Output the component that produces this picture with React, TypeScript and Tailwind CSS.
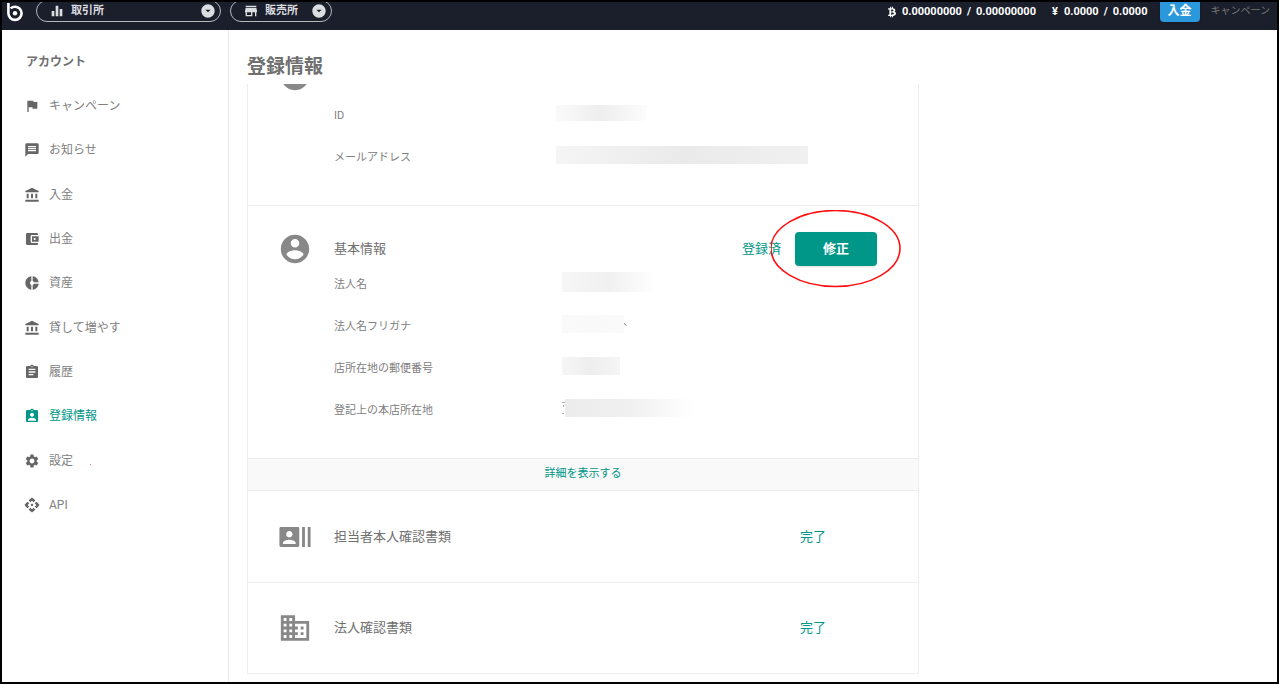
import type { ReactNode } from 'react'
import clsx from 'clsx'
import { FaBtc } from 'react-icons/fa'
import {
  MdAccountBalance,
  MdAccountBalanceWallet,
  MdArrowDropDownCircle,
  MdAssignment,
  MdAssignmentInd,
  MdCheckCircle,
  MdDomain,
  MdDonutSmall,
  MdEqualizer,
  MdFlag,
  MdMessage,
  MdRecentActors,
  MdSettings,
  MdStore
} from 'react-icons/md'

type Icon = (props: { className?: string }) => ReactNode

interface NavItem {
  label: string
  icon: Icon
  active?: boolean
  dot?: boolean
}

interface Field {
  label: string
  // size and shading of the masked value
  mask: string
  mark?: 'before' | 'after'
}

const PersonIcon: Icon = ({ className }) => (
  <svg viewBox="0 0 24 24" className={className} fill="currentColor">
    <path d="M12 2C6.48 2 2 6.48 2 12s4.48 10 10 10 10-4.48 10-10S17.52 2 12 2zm0 3c1.66 0 3 1.34 3 3s-1.34 3-3 3-3-1.34-3-3 1.34-3 3-3zm0 14.2c-2.5 0-4.71-1.28-6-3.22.03-1.99 4-3.08 6-3.08 1.99 0 5.97 1.09 6 3.08-1.29 1.94-3.5 3.22-6 3.22z" />
  </svg>
)

const ApiIcon: Icon = ({ className }) => (
  <svg viewBox="0 0 24 24" className={className} fill="none">
    <path
      d="M8.2 6.4L12 3.2l3.8 3.2M17.6 8.2l3.2 3.8-3.2 3.8M15.8 17.6L12 20.8l-3.8-3.2M6.4 15.8L3.2 12l3.2-3.8"
      stroke="currentColor"
      strokeWidth="3.8"
    />
    <circle cx="12" cy="12" r="1.7" fill="currentColor" />
  </svg>
)

const navItems: NavItem[] = [
  { label: 'キャンペーン', icon: MdFlag },
  { label: 'お知らせ', icon: MdMessage },
  { label: '入金', icon: MdAccountBalance },
  { label: '出金', icon: MdAccountBalanceWallet },
  { label: '資産', icon: MdDonutSmall },
  { label: '貸して増やす', icon: MdAccountBalance },
  { label: '履歴', icon: MdAssignment },
  { label: '登録情報', icon: MdAssignmentInd, active: true },
  { label: '設定', icon: MdSettings, dot: true },
  { label: 'API', icon: ApiIcon }
]

const accountFields: Field[] = [
  { label: 'ID', mask: 'w-[90px] h-4 from-[#fafafa] via-[#eeeeee] to-[#fcfcfc]' },
  { label: 'メールアドレス', mask: 'w-[252px] h-[18px] from-[#f5f5f5] via-[#eaeaea] to-[#f0f0f0]' }
]

const companyFields: Field[] = [
  { label: '法人名', mask: 'w-[94px] h-5 from-[#f6f6f6] via-[#f0f0f0] to-white' },
  { label: '法人名フリガナ', mask: 'w-[62px] h-[18px] from-[#fafafa] via-[#f9f9f9] to-[#fafafa]', mark: 'after' },
  { label: '店所在地の郵便番号', mask: 'w-[58px] h-[18px] from-[#f6f6f6] via-[#eeeeee] to-[#f5f5f5]' },
  { label: '登記上の本店所在地', mask: 'w-[130px] h-[18px] from-[#ececec] via-[#f0f0f0] to-white', mark: 'before' }
]

const Logo = () => (
  <svg viewBox="0 0 18 20" className="h-5 w-[18px] text-white" fill="none" role="img" aria-label="bitbank">
    <path d="M2.4 1v10.3a6.6 6.6 0 1 0 6.6-6.6c-1.7 0-3.2.6-4.4 1.7" stroke="currentColor" strokeWidth="2.6" />
    <circle cx="9" cy="11.3" r="2.2" fill="currentColor" />
  </svg>
)

const MarketPicker = ({ label, icon: Icon, className }: { label: string; icon: Icon; className: string }) => (
  <button
    className={clsx('flex h-[22px] items-center rounded-full border border-[#b5b7bb] pr-1 pl-3 text-[#dcdde0]', className)}
  >
    <Icon className="h-4 w-4 shrink-0" />
    <span className="ml-1.5 text-[11px] font-bold">{label}</span>
    <MdArrowDropDownCircle className="ml-auto h-4 w-4 shrink-0" />
  </button>
)

const Balance = ({ symbol, available, total }: { symbol: ReactNode; available: string; total: string }) => (
  <div className="flex items-center gap-[5px]">
    <span className="mr-px">{symbol}</span>
    <span>{available}</span>
    <span>/</span>
    <span>{total}</span>
  </div>
)

const FieldList = ({ fields, labelClass }: { fields: Field[]; labelClass: string }) => (
  <dl className="flex flex-col gap-[26px] pb-10 pl-[86px] text-[11px] leading-4 text-[#808080]">
    {fields.map((field) => (
      <div key={field.label} className="flex h-4 items-center">
        <dt className={clsx('shrink-0 pt-0.5', labelClass)}>{field.label}</dt>
        <dd className="flex items-center pb-1">
          {field.mark === 'before' && (
            <svg viewBox="0 0 3 14" className="h-[14px] w-[3px]" stroke="#b8aaa0" fill="none">
              <path d="M0 1.5h3M0 12.5h2M1.5 4v2" />
            </svg>
          )}
          <span className={clsx('bg-linear-to-r', field.mask)} />
          {field.mark === 'after' && (
            <svg viewBox="0 0 3 3" className="h-[3px] w-[3px]" stroke="#777777" fill="none">
              <path d="M0 .5l2.5 2" />
            </svg>
          )}
        </dd>
      </div>
    ))}
  </dl>
)

const SectionHeader = ({ icon: Icon, title, children }: { icon: Icon; title: string; children?: ReactNode }) => (
  <div className="flex h-[34px] items-center pl-[30px]">
    <Icon className="h-[34px] w-[34px] shrink-0 text-[#888888]" />
    <h3 className="ml-[22px] text-[13px] text-[#707070]">{title}</h3>
    {children}
  </div>
)

export default function App() {
  return (
    <div className="flex h-screen flex-col bg-white pr-px font-['Roboto','Noto_Sans_CJK_JP',sans-serif]">
      <div className="flex min-h-0 flex-1 flex-col overflow-hidden border-2 border-black">
        {/* Header */}
        <header className="flex h-7 shrink-0 items-end overflow-hidden bg-[#1b1f2b] pr-[7px] pb-2 pl-1">
          <Logo />
          <MarketPicker label="取引所" icon={MdEqualizer} className="ml-3 w-[185px]" />
          <MarketPicker label="販売所" icon={MdStore} className="ml-[9px] w-[102px]" />
          <div className="ml-auto flex h-[22px] items-center gap-4 pt-0.5 text-[11px] font-bold whitespace-nowrap text-white">
            <Balance symbol={<FaBtc className="h-3 w-2" />} available="0.00000000" total="0.00000000" />
            <Balance symbol="¥" available="0.0000" total="0.0000" />
          </div>
          <button className="ml-3 h-[22px] w-10 rounded-b-sm bg-[#2b98db] text-[12px] font-bold text-white shadow-sm">
            入金
          </button>
          <a href="#campaign" className="ml-[11px] text-[10px] leading-[22px] text-[#777777]">
            キャンペーン
          </a>
        </header>

        <div className="flex min-h-0 flex-1">
          {/* Sidebar */}
          <aside className="w-[227px] shrink-0 border-r border-[#e8e8e8] pt-6 pl-[22px]">
            <h2 className="pl-0.5 text-[12px] leading-4 font-bold text-[#707070]">アカウント</h2>
            <nav className="mt-[14px] grid h-[443px] auto-rows-fr">
              {navItems.map(({ label, icon: Icon, active, dot }) => (
                <a
                  key={label}
                  href="#"
                  className={clsx(
                    'flex items-center gap-[9px] text-[12px]',
                    active ? 'text-[#009688]' : 'text-[#808080]'
                  )}
                >
                  <Icon className={clsx('h-4 w-4', !active && 'text-[#666666]')} />
                  {label}
                  {dot && <span className="mt-2 ml-2 h-px w-px bg-[#dd8899]" />}
                </a>
              ))}
            </nav>
          </aside>

          {/* Registered info */}
          <main className="min-w-0 flex-1 pl-[18px]">
            <h1 className="flex h-[54px] items-center pt-5 text-[19px] font-bold text-[#707070]">登録情報</h1>

            <div className="max-w-[672px] border-x border-[#eeeeee]">
              <section className="border-b border-[#eeeeee]">
                <div className="mb-[14px] flex h-[9px] items-end overflow-hidden pl-[30px]">
                  <MdCheckCircle className="h-[34px] w-[34px] shrink-0 text-[#888888]" />
                </div>
                <FieldList fields={accountFields} labelClass="w-[222px]" />
              </section>

              <section className="border-b border-[#eeeeee] pt-[26px]">
                <SectionHeader icon={PersonIcon} title="基本情報">
                  <span className="ml-auto text-[13px] text-[#009688]">登録済</span>
                  <div className="relative mr-[41px] ml-[14px]">
                    <button className="block h-[34px] w-[82px] rounded-sm bg-[#009688] text-[13px] font-bold text-white shadow">
                      修正
                    </button>
                    <svg
                      viewBox="0 0 130 78"
                      className="pointer-events-none absolute -inset-x-6 -inset-y-[22px]"
                      fill="none"
                    >
                      <ellipse cx="64.5" cy="38.5" rx="64.5" ry="38" stroke="#ff1010" strokeWidth="1.6" />
                    </svg>
                  </div>
                </SectionHeader>
                <div className="h-2.5" />
                <FieldList fields={companyFields} labelClass="w-[228px]" />
              </section>

              <button className="block h-8 w-full border-b border-[#eeeeee] bg-[#f9f9f9] text-[11px] text-[#009688]">
                詳細を表示する
              </button>

              <section className="flex h-[92px] flex-col justify-center border-b border-[#eeeeee]">
                <SectionHeader icon={MdRecentActors} title="担当者本人確認書類">
                  <span className="mr-[92px] ml-auto text-[13px] text-[#009688]">完了</span>
                </SectionHeader>
              </section>

              <section className="flex h-[91px] flex-col justify-center border-b border-[#eeeeee]">
                <SectionHeader icon={MdDomain} title="法人確認書類">
                  <span className="mr-[92px] ml-auto text-[13px] text-[#009688]">完了</span>
                </SectionHeader>
              </section>
            </div>
          </main>
        </div>
      </div>
    </div>
  )
}
